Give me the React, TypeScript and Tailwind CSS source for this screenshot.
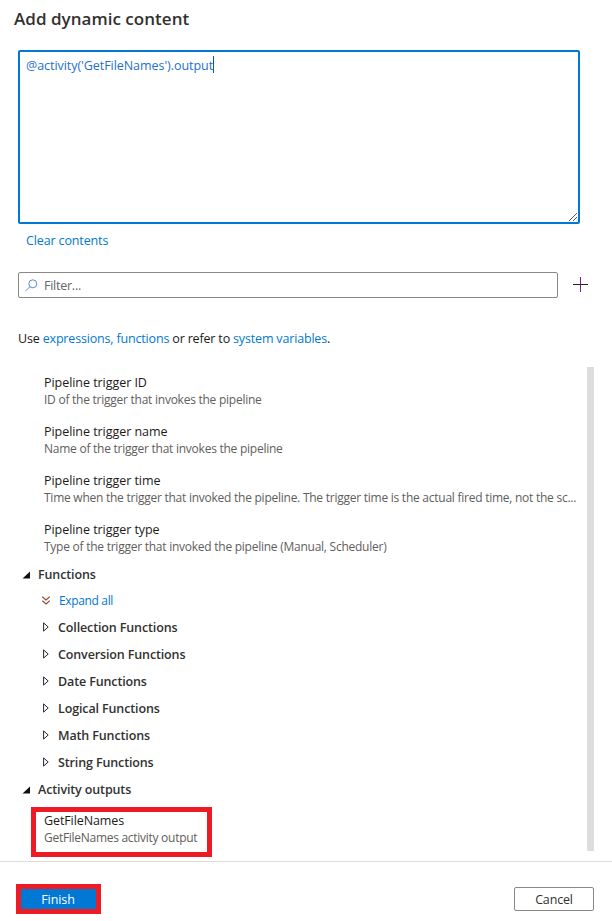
import type { ReactNode } from "react";

const triggers = [
  { name: "Pipeline trigger ID", info: "ID of the trigger that invokes the pipeline" },
  { name: "Pipeline trigger name", info: "Name of the trigger that invokes the pipeline" },
  {
    name: "Pipeline trigger time",
    info: "Time when the trigger that invoked the pipeline. The trigger time is the actual fired time, not the sc...",
  },
  { name: "Pipeline trigger type", info: "Type of the trigger that invoked the pipeline (Manual, Scheduler)" },
];

const functionGroups = [
  "Collection Functions",
  "Conversion Functions",
  "Date Functions",
  "Logical Functions",
  "Math Functions",
  "String Functions",
];

function GroupHeading({ children }: { children: ReactNode }) {
  return (
    <div className="flex h-[27px] items-center pl-[22px] font-semibold tracking-[-0.13px] text-[#323130]">
      <svg width="9" height="8" viewBox="0 0 9 8" className="mr-[7px] shrink-0">
        <path d="M8 0.5V7.5H0.5Z" fill="#111" />
      </svg>
      <span className="pt-[1px]">{children}</span>
    </div>
  );
}

export default function App() {
  return (
    <div className="flex h-[921px] w-[612px] flex-col overflow-hidden bg-white font-['Open_Sans','Noto_Sans',sans-serif] text-[12.5px] tracking-[-0.05px] whitespace-nowrap text-[#1b1a19]">
      <h1 className="h-[50px] shrink-0 pt-[6px] pl-[14px] text-[17px] leading-[25px] font-semibold tracking-[0.03px] text-[#323130]">
        <span>Add dynamic content</span>
      </h1>

      <div className="ml-[18px] flex h-[174px] w-[562px] shrink-0 flex-col justify-between rounded-[2px] border-2 border-[#0078d4]">
        <div className="flex items-start pt-[4px] pl-[6px] leading-[18px] text-[#1f6fc9]">
          <span className="pt-[1px]">@activity('GetFileNames').output</span>
          <span className="h-[17px] w-px bg-[#0a5a9c]" />
        </div>
        <svg width="8" height="8" viewBox="0 0 8 8" className="mr-[1px] mb-[1px] self-end" stroke="#444" strokeWidth="0.9">
          <path d="M0 8L8 0M4 8L8 4" />
        </svg>
      </div>

      <div className="h-[48px] shrink-0 pt-[8px] pl-[26px] leading-[18px] tracking-[-0.13px] text-[#0078d4]">
        <span>Clear contents</span>
      </div>

      <div className="flex h-[26px] shrink-0 items-center pl-[18px]">
        <div className="flex h-[26px] w-[540px] items-center rounded-[2px] border border-[#8a8886] pl-[6px] text-[#666]">
          <svg width="13" height="13" viewBox="0 0 13 13" fill="none" stroke="#5b8bd8" className="mr-[6px]">
            <circle cx="7.8" cy="4.8" r="4" />
            <path d="M4.9 7.7L0.4 12.2" />
          </svg>
          <span className="pt-[2px] tracking-[-0.25px]">Filter...</span>
        </div>
        <svg width="15" height="15" viewBox="0 0 15 15" className="mb-[1px] ml-[15px]" shapeRendering="crispEdges">
          <path d="M7 0h1v15h-1z" fill="#881798" />
          <path d="M0 7h15v1h-15z" fill="#222" />
        </svg>
      </div>

      <p className="h-[69px] shrink-0 pt-[32px] pl-[18px] leading-[18px] tracking-[-0.17px]">
        <span>
          Use <span className="text-[#0078d4]">expressions, functions</span> or refer to{" "}
          <span className="text-[#0078d4]">system variables</span>.
        </span>
      </p>

      <div className="flex h-[495px] shrink-0 justify-between border-b border-[#dcdcdc] pr-[18px]">
        <div className="w-[580px] pt-[7px]">
          <div className="flex flex-col gap-[14px] pl-[44px]">
            {triggers.map((t) => (
              <div key={t.name}>
                <div className="h-[17px] leading-[18px]">
                  <span>{t.name}</span>
                </div>
                <div className="h-[18px] text-[12px] leading-[17px] tracking-[-0.25px] text-[#605e5c]">
                  <span>{t.info}</span>
                </div>
              </div>
            ))}
          </div>

          <div className="mt-[5px]">
            <GroupHeading>Functions</GroupHeading>
            <div className="flex h-[26px] items-center pl-[42px] text-[12px] tracking-[-0.35px] text-[#0078d4]">
              <svg width="8" height="9" viewBox="0 0 8 9" fill="none" stroke="#8a4b35" strokeWidth="1.1" className="mr-[9px] mb-[1px]">
                <path d="M0.3 0.7L4 3.9L7.7 0.7M0.3 4.7L4 7.9L7.7 4.7" />
              </svg>
              <span>Expand all</span>
            </div>
            {functionGroups.map((name) => (
              <div key={name} className="flex h-[27px] items-center pl-[43px] font-semibold tracking-[-0.13px] text-[#323130]">
                <svg width="6" height="10" viewBox="0 0 6 10" fill="none" stroke="#2b2233" className="mr-[9px] mb-[1px]">
                  <path d="M0.6 0.9V9.1L5.2 5Z" />
                </svg>
                <span className="pt-[1px]">{name}</span>
              </div>
            ))}
            <GroupHeading>Activity outputs</GroupHeading>
          </div>

          <div className="mt-[4px] ml-[31px] h-[50px] w-[181px] border-[5px] border-[#ed1c24] pl-[8px]">
            <div className="h-[17px] leading-[17px] tracking-[-0.1px]">
              <span>GetFileNames</span>
            </div>
            <div className="h-[17px] text-[12px] leading-[17px] tracking-[-0.28px] text-[#605e5c]">
              <span>GetFileNames activity output</span>
            </div>
          </div>
        </div>
        <div className="h-[484px] w-[7px] bg-[#dddddd]" />
      </div>

      <div className="flex h-[59px] shrink-0 items-start justify-between pt-[22px] pr-[18px] pl-[16px]">
        <button className="h-[30px] w-[85px] border-[5px] border-[#ed1c24] bg-[#0078d4] pt-[1px] pr-[1px] text-[12.5px] leading-[20px] font-medium tracking-[-0.1px] text-white">
          <span>Finish</span>
        </button>
        <button className="mt-[3px] h-[24px] w-[80px] rounded-[2px] border border-[#8a8886] pt-[1px] leading-[22px] tracking-[-0.15px] text-[#323130]">
          <span>Cancel</span>
        </button>
      </div>
    </div>
  );
}
